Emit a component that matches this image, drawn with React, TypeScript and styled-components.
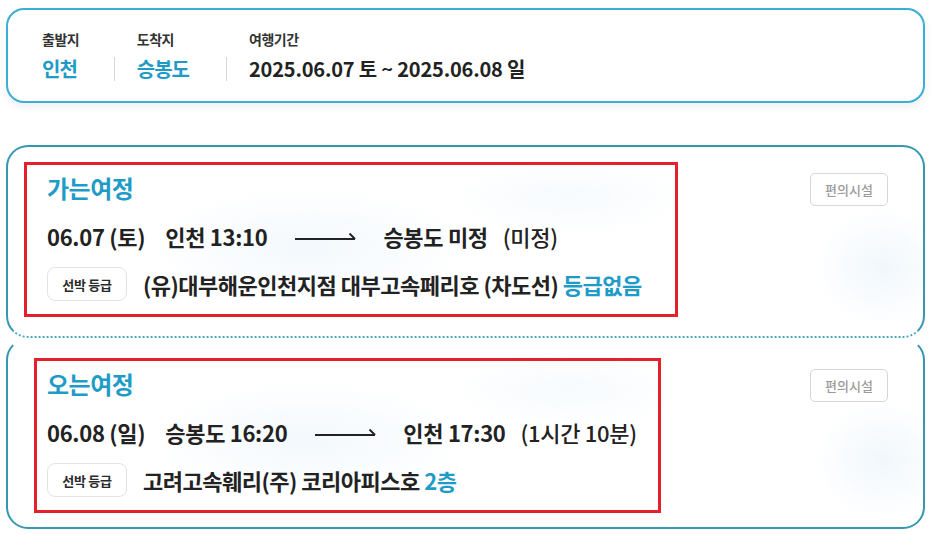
import React from 'react';
import styled, { createGlobalStyle } from 'styled-components';

const GlobalStyle = createGlobalStyle`
    html, body {
        margin: 0;
        padding: 0;
        background: #ffffff;
    }

    body {
        font-family: 'Noto Sans CJK KR', 'Noto Sans', sans-serif;
        color: #222222;
    }
`;

const TEAL = '#1f9bc8';

const Page = styled.div`
    display: flex;
    flex-direction: column;
    gap: 42px;
    width: 919px;
    padding: 8px 8px 0 6px;
`;

const SummaryCard = styled.div`
    display: grid;
    grid-template-columns: auto auto auto;
    justify-content: start;
    row-gap: 9px;
    padding: 20px 34px 20px 34px;
    border: 2px solid #3aaed3;
    border-radius: 18px;
    background: #ffffff;
    box-shadow: 0 4px 8px rgba(0, 40, 60, 0.07);
`;

const SummaryLabel = styled.div<{ $divided?: boolean }>`
    padding-left: ${(p) => (p.$divided ? '23px' : '0')};
    font-size: 14px;
    line-height: 18px;
    font-weight: 700;
    color: #333333;
    letter-spacing: -0.5px;
`;

const SummaryValue = styled.div<{ $accent?: boolean; $divided?: boolean; $last?: boolean }>`
    align-self: center;
    padding-left: ${(p) => (p.$divided ? '22px' : '0')};
    padding-right: ${(p) => (p.$last ? '0' : '37px')};
    border-left: ${(p) => (p.$divided ? '1px solid #d6d6d6' : 'none')};
    font-size: 20px;
    line-height: 24px;
    font-weight: 700;
    color: ${(p) => (p.$accent ? TEAL : '#222222')};
    letter-spacing: ${(p) => (p.$accent ? '-1px' : '-0.2px')};
    white-space: nowrap;
`;

const Ticket = styled.div`
    display: flex;
    flex-direction: column;
`;

const TicketSection = styled.section<{ $first?: boolean; $pt: number; $pb: number; $pl: number }>`
    display: flex;
    justify-content: space-between;
    align-items: flex-start;
    padding: ${(p) => `${p.$pt}px 35px ${p.$pb}px ${p.$pl}px`};
    border: 2px solid #3598b0;
    border-bottom: ${(p) => (p.$first ? '2px dotted #4aa6bd' : '2px solid #3598b0')};
    border-top-color: ${(p) => (p.$first ? '#3598b0' : 'transparent')};
    border-radius: 22px;
    background-color: #ffffff;
    background-image:
        radial-gradient(ellipse 200px 75px at 300px 100px, rgba(232, 243, 250, 0.55), transparent 80%),
        radial-gradient(ellipse 85px 75px at 875px 120px, rgba(230, 242, 250, 0.6), transparent 80%),
        radial-gradient(ellipse 150px 50px at 560px 50px, rgba(236, 245, 251, 0.45), transparent 80%);
`;

const Highlight = styled.div<{ $pl: number; $pr: number }>`
    display: flex;
    flex-direction: column;
    align-items: flex-start;
    padding: ${(p) => `10px ${p.$pr}px 13px ${p.$pl}px`};
    border: 3px solid #e3202b;
`;

const TripTitle = styled.h2`
    margin: 0 0 22px 0;
    font-size: 24px;
    line-height: 26px;
    font-weight: 700;
    color: ${TEAL};
    letter-spacing: -0.5px;
`;

const RouteRow = styled.div`
    display: flex;
    align-items: center;
    height: 26px;
    margin-bottom: 18px;
    white-space: nowrap;
`;

const RouteText = styled.span<{ $light?: boolean; $gap?: number }>`
    margin-left: ${(p) => p.$gap ?? 0}px;
    font-size: 22px;
    line-height: 26px;
    font-weight: ${(p) => (p.$light ? 500 : 700)};
    color: #222222;
    letter-spacing: -0.3px;
`;

const ArrowMark = styled.svg`
    flex: none;
    margin: 0 27px 0 28px;
`;

const ShipRow = styled.div`
    display: flex;
    align-items: center;
    gap: 16px;
    white-space: nowrap;
`;

const GradeBadge = styled.span`
    display: inline-flex;
    align-items: center;
    justify-content: center;
    box-sizing: border-box;
    width: 80px;
    height: 34px;
    border: 1px solid #e1e4e6;
    border-radius: 8px;
    background: #ffffff;
    font-size: 13px;
    font-weight: 700;
    color: #2a2a2a;
    letter-spacing: -0.3px;
`;

const ShipName = styled.span`
    font-size: 22px;
    line-height: 26px;
    font-weight: 700;
    color: #222222;
    letter-spacing: -0.5px;
`;

const GradeText = styled.span`
    color: ${TEAL};
`;

const FacilityButton = styled.button`
    flex: none;
    width: 78px;
    height: 33px;
    margin-top: 11px;
    padding: 0;
    border: 1px solid #d4d6d8;
    border-radius: 5px;
    background: #ffffff;
    font-family: 'Noto Sans CJK KR', sans-serif;
    font-size: 13px;
    font-weight: 500;
    color: #9a9a9a;
    letter-spacing: 0;
`;

const Arrow = () => (
    <ArrowMark width="61" height="14" viewBox="0 0 61 14">
        <line x1="0" y1="10" x2="60" y2="10" stroke="#222" strokeWidth="2" />
        <line x1="54.5" y1="4.5" x2="60" y2="10" stroke="#222" strokeWidth="2" />
    </ArrowMark>
);

type Trip = {
    title: string;
    date: string;
    from: string;
    to: string;
    note: string;
    ship: string;
    grade: string;
};

const trips: Trip[] = [
    {
        title: '가는여정',
        date: '06.07 (토)',
        from: '인천 13:10',
        to: '승봉도 미정',
        note: '(미정)',
        ship: '(유)대부해운인천지점 대부고속페리호 (차도선)',
        grade: '등급없음',
    },
    {
        title: '오는여정',
        date: '06.08 (일)',
        from: '승봉도 16:20',
        to: '인천 17:30',
        note: '(1시간 10분)',
        ship: '고려고속훼리(주) 코리아피스호',
        grade: '2층',
    },
];

const layouts = [
    { pt: 15, pb: 19, pl: 16, hl: 20, hr: 33 },
    { pt: 18, pb: 14, pl: 26, hl: 10, hr: 21 },
];

const App = (): JSX.Element => {
    return (
        <Page>
            <GlobalStyle />
            <SummaryCard>
                <SummaryLabel>출발지</SummaryLabel>
                <SummaryLabel $divided>도착지</SummaryLabel>
                <SummaryLabel $divided>여행기간</SummaryLabel>
                <SummaryValue $accent>인천</SummaryValue>
                <SummaryValue $accent $divided>승봉도</SummaryValue>
                <SummaryValue $divided $last>2025.06.07 토 ~ 2025.06.08 일</SummaryValue>
            </SummaryCard>

            <Ticket>
                {trips.map((trip, i) => {
                    const l = layouts[i];
                    return (
                        <TicketSection key={trip.title} $first={i === 0} $pt={l.pt} $pb={l.pb} $pl={l.pl}>
                            <Highlight $pl={l.hl} $pr={l.hr}>
                                <TripTitle>{trip.title}</TripTitle>
                                <RouteRow>
                                    <RouteText>{trip.date}</RouteText>
                                    <RouteText $gap={20}>{trip.from}</RouteText>
                                    <Arrow />
                                    <RouteText>{trip.to}</RouteText>
                                    <RouteText $light $gap={15}>{trip.note}</RouteText>
                                </RouteRow>
                                <ShipRow>
                                    <GradeBadge>선박 등급</GradeBadge>
                                    <ShipName>
                                        {trip.ship} <GradeText>{trip.grade}</GradeText>
                                    </ShipName>
                                </ShipRow>
                            </Highlight>
                            <FacilityButton type="button">편의시설</FacilityButton>
                        </TicketSection>
                    );
                })}
            </Ticket>
        </Page>
    );
};

export default App;
